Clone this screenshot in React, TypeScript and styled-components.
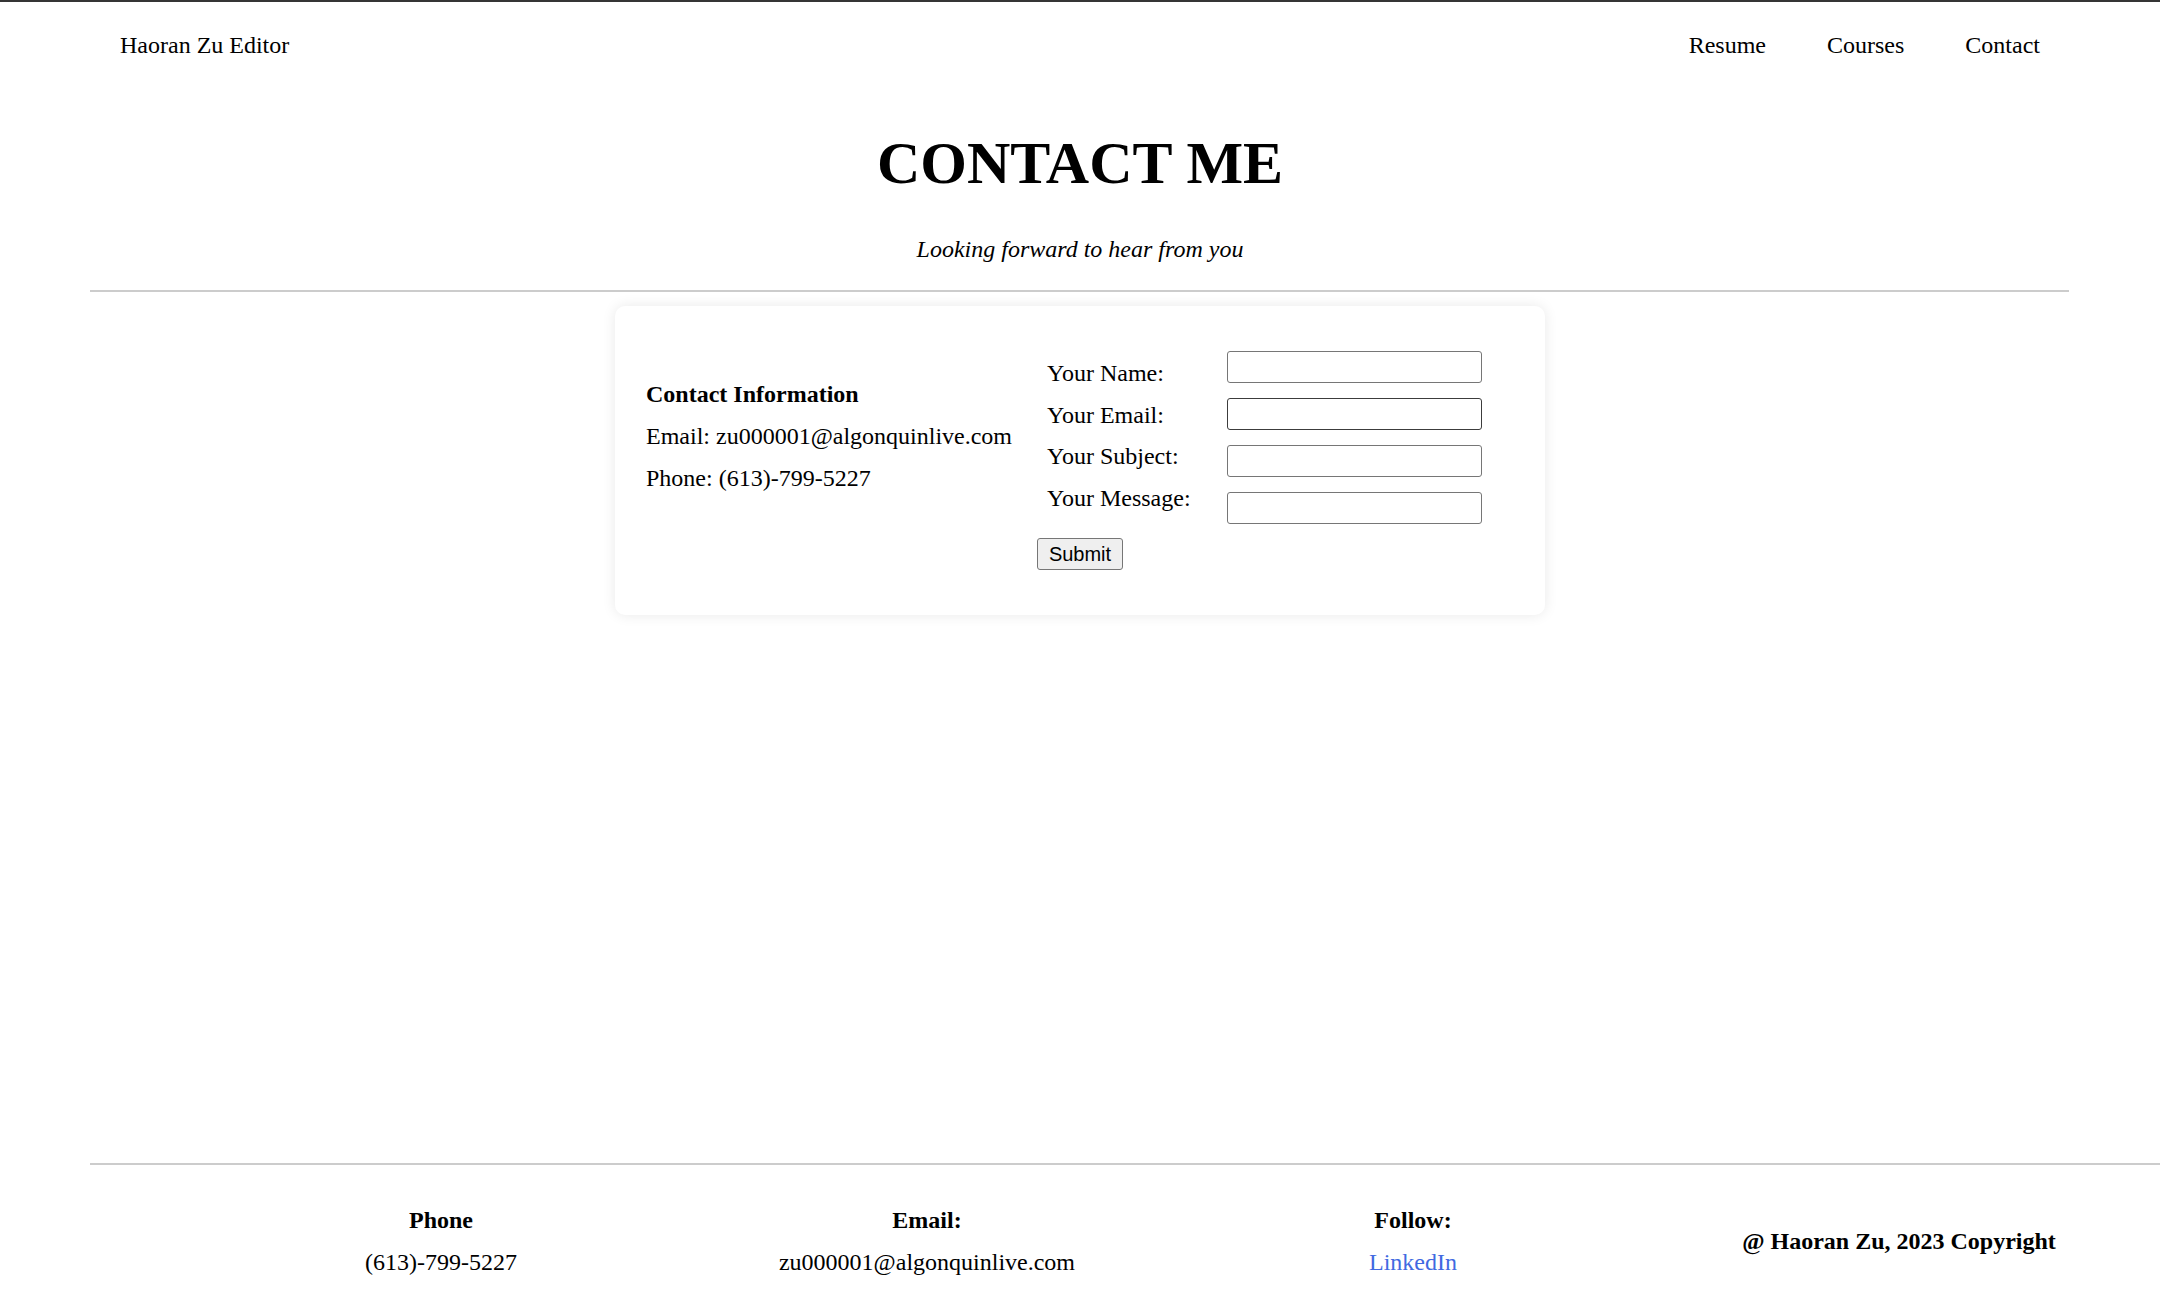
import React from "react";
import styled, { createGlobalStyle } from "styled-components";

const GlobalStyle = createGlobalStyle`
  *, *::before, *::after { box-sizing: border-box; }
  html, body { margin: 0; padding: 0; background: #ffffff; }
  body {
    font-family: "Liberation Serif", "Times New Roman", serif;
    color: #000000;
  }
`;

const Page = styled.div`
  display: flex;
  flex-direction: column;
  min-height: 100vh;
  border-top: 2px solid #353535;
`;

const Header = styled.header`
  display: flex;
  justify-content: space-between;
  align-items: center;
  padding: 28px 120px 0 120px;
  line-height: 30px;
`;

const Brand = styled.div`
  font-size: 24px;
`;

const Nav = styled.nav`
  display: flex;
  gap: 61px;
`;

const NavLink = styled.a`
  font-size: 24px;
  color: #000000;
  text-decoration: none;
`;

const Main = styled.main`
  display: flex;
  flex-direction: column;
`;

const Title = styled.h1`
  margin: 73px 0 0 0;
  font-size: 60px;
  font-weight: bold;
  line-height: 60px;
  text-align: center;
`;

const Subtitle = styled.p`
  margin: 41px 0 0 0;
  font-size: 24px;
  font-style: italic;
  line-height: 30px;
  text-align: center;
`;

const Divider = styled.hr`
  margin: 26px 91px 0 90px;
  border: none;
  border-top: 2px solid #cccccc;
  height: 0;
`;

const Card = styled.section`
  display: flex;
  align-self: center;
  width: 930px;
  margin-top: 14px;
  padding: 45px 63px 45px 31px;
  background: #ffffff;
  border-radius: 10px;
  box-shadow: 0 0 14px rgba(0, 0, 0, 0.09);
`;

const InfoColumn = styled.div`
  flex: 0 0 391px;
  padding-top: 22px;
  font-size: 24px;
  line-height: 42px;
`;

const InfoHeading = styled.div`
  font-weight: bold;
  line-height: 42px;
`;

const InfoLine = styled.div`
  white-space: nowrap;
`;

const Form = styled.form`
  display: flex;
  flex-direction: column;
  align-items: flex-start;
  gap: 14px;
`;

const FieldsRow = styled.div`
  display: flex;
`;

const LabelColumn = styled.div`
  display: flex;
  flex-direction: column;
  width: 190px;
  padding: 2px 0 0 10px;
`;

const Label = styled.label`
  font-size: 24px;
  line-height: 41.7px;
  white-space: nowrap;
`;

const InputColumn = styled.div`
  display: flex;
  flex-direction: column;
  gap: 15px;
`;

const TextInput = styled.input<{ $dark?: boolean }>`
  width: 255px;
  height: 32px;
  margin: 0;
  padding: 2px 4px;
  border: 1px solid ${(p) => (p.$dark ? "#3c3c3c" : "#767676")};
  border-radius: 3px;
  background: #ffffff;
  font-family: "Liberation Sans", Arial, sans-serif;
  font-size: 20px;
`;

const SubmitButton = styled.button`
  width: 86px;
  height: 32px;
  padding: 0;
  border: 1px solid #767676;
  border-radius: 3px;
  background: #efefef;
  color: #000000;
  font-family: "Liberation Sans", Arial, sans-serif;
  font-size: 20px;
`;

const Footer = styled.footer`
  margin-top: auto;
  margin-left: 90px;
  padding: 34px 0 26px 108px;
  border-top: 2px solid #cccccc;
`;

const FooterGrid = styled.div`
  display: grid;
  grid-template-columns: repeat(4, 486px);
  align-items: center;
  font-size: 24px;
  line-height: 42px;
  text-align: center;
`;

const FooterCol = styled.div`
  display: flex;
  flex-direction: column;
  align-items: center;
`;

const FooterHeading = styled.div`
  font-weight: bold;
`;

const FooterLink = styled.a`
  color: #4169e1;
  text-decoration: none;
`;

const Copyright = styled.div`
  font-weight: bold;
`;

const fields = [
  { id: "name", label: "Your Name:" },
  { id: "email", label: "Your Email:", dark: true },
  { id: "subject", label: "Your Subject:" },
  { id: "message", label: "Your Message:" },
];

export default function App() {
  return (
    <>
      <GlobalStyle />
      <Page>
        <Header>
          <Brand>Haoran Zu Editor</Brand>
          <Nav>
            <NavLink href="#resume">Resume</NavLink>
            <NavLink href="#courses">Courses</NavLink>
            <NavLink href="#contact">Contact</NavLink>
          </Nav>
        </Header>
        <Main>
          <Title>CONTACT ME</Title>
          <Subtitle>Looking forward to hear from you</Subtitle>
          <Divider />
          <Card>
            <InfoColumn>
              <InfoHeading>Contact Information</InfoHeading>
              <InfoLine>Email: zu000001@algonquinlive.com</InfoLine>
              <InfoLine>Phone: (613)-799-5227</InfoLine>
            </InfoColumn>
            <Form onSubmit={(e) => e.preventDefault()}>
              <FieldsRow>
                <LabelColumn>
                  {fields.map((f) => (
                    <Label key={f.id} htmlFor={f.id}>
                      {f.label}
                    </Label>
                  ))}
                </LabelColumn>
                <InputColumn>
                  {fields.map((f) => (
                    <TextInput key={f.id} id={f.id} type="text" $dark={f.dark} />
                  ))}
                </InputColumn>
              </FieldsRow>
              <SubmitButton type="submit">Submit</SubmitButton>
            </Form>
          </Card>
        </Main>
        <Footer>
          <FooterGrid>
            <FooterCol>
              <FooterHeading>Phone</FooterHeading>
              <div>(613)-799-5227</div>
            </FooterCol>
            <FooterCol>
              <FooterHeading>Email:</FooterHeading>
              <div>zu000001@algonquinlive.com</div>
            </FooterCol>
            <FooterCol>
              <FooterHeading>Follow:</FooterHeading>
              <FooterLink href="#linkedin">LinkedIn</FooterLink>
            </FooterCol>
            <FooterCol>
              <Copyright>@ Haoran Zu, 2023 Copyright</Copyright>
            </FooterCol>
          </FooterGrid>
        </Footer>
      </Page>
    </>
  );
}
